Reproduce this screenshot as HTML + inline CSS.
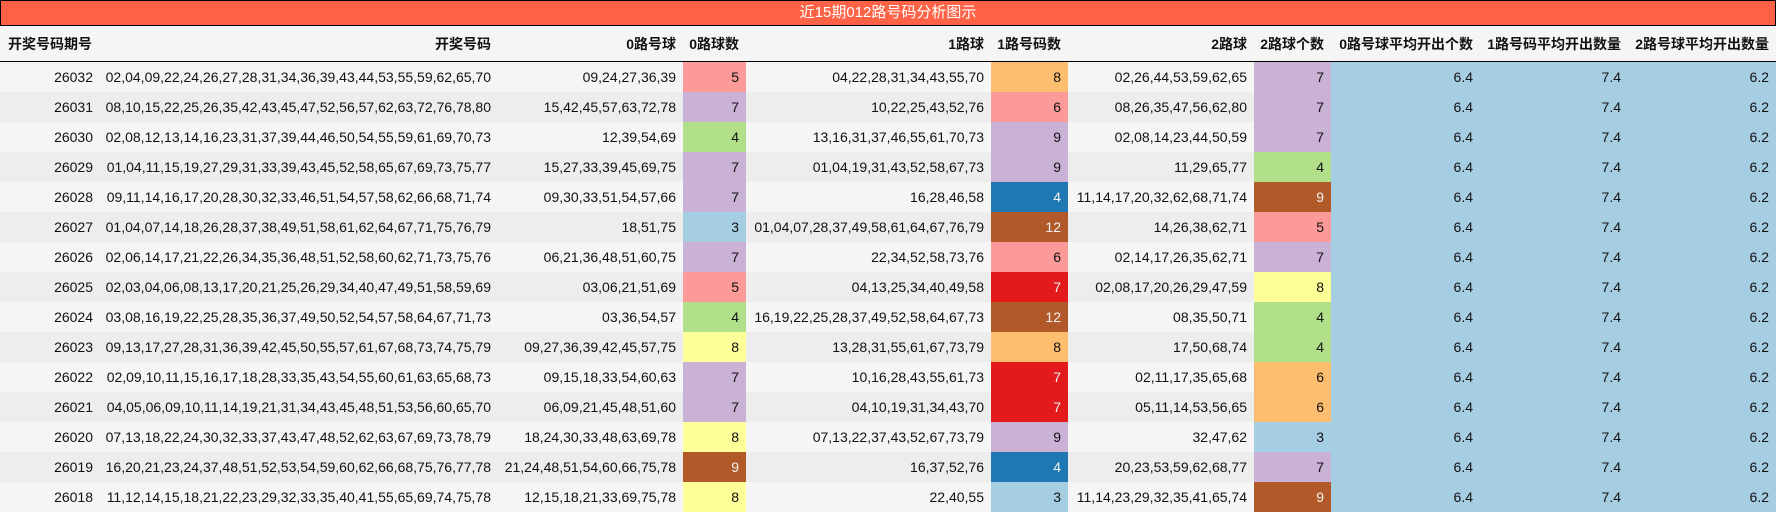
<!DOCTYPE html>
<html><head><meta charset="utf-8"><style>
html,body{margin:0;padding:0;background:#fff;width:1776px;height:513px;overflow:hidden}
body{font-family:"Liberation Sans","Noto Sans CJK SC",sans-serif;font-size:14px;color:#111}
.title{position:absolute;left:0;top:0;width:1774px;height:24px;background:#ff6347;border:1px solid #000;color:#fff;text-align:center;line-height:24px;font-size:15px}
table{position:absolute;left:0;top:26px;border-collapse:collapse;table-layout:fixed;width:1776px}
th,td{padding:0 7px 0 0;text-align:right;white-space:nowrap;overflow:hidden}
th{height:35px;background:#f5f5f5;font-weight:bold;font-size:14px;border-bottom:1px solid #000}
th:first-child{text-align:left;padding-left:8px}
td{height:30px}
tr:nth-child(even) td{background:#f5f5f5}
tr:nth-child(odd) td{background:#ededed}
td.b{background:#a6cee3!important}
.c3{background:#a6cee3!important}.c4g{background:#b2df8a!important}.c5{background:#fb9a99!important}
.c6{background:#fb9a99!important}.c6o{background:#fdbf6f!important}.c7{background:#cab2d6!important}
.c8{background:#ffff99!important}.c8o{background:#fdbf6f!important}.c9{background:#cab2d6!important}
.br{background:#b15928!important;color:#f3f3f3}.db{background:#1f78b4!important;color:#f3f3f3}.rd{background:#e31a1c!important;color:#f3f3f3}
</style></head><body>
<div class="title">近15期012路号码分析图示</div>
<table>
<colgroup><col style="width:100px"><col style="width:398px"><col style="width:185px"><col style="width:63px"><col style="width:245px"><col style="width:77px"><col style="width:186px"><col style="width:77px"><col style="width:149px"><col style="width:148px"><col style="width:148px"></colgroup>
<tr><th>开奖号码期号</th><th>开奖号码</th><th>0路号球</th><th>0路球数</th><th>1路球</th><th>1路号码数</th><th>2路球</th><th>2路球个数</th><th>0路号球平均开出个数</th><th>1路号码平均开出数量</th><th>2路号球平均开出数量</th></tr>
<tr><td>26032</td><td>02,04,09,22,24,26,27,28,31,34,36,39,43,44,53,55,59,62,65,70</td><td>09,24,27,36,39</td><td class="c5">5</td><td>04,22,28,31,34,43,55,70</td><td class="c8o">8</td><td>02,26,44,53,59,62,65</td><td class="c7">7</td><td class="b">6.4</td><td class="b">7.4</td><td class="b">6.2</td></tr>
<tr><td>26031</td><td>08,10,15,22,25,26,35,42,43,45,47,52,56,57,62,63,72,76,78,80</td><td>15,42,45,57,63,72,78</td><td class="c7">7</td><td>10,22,25,43,52,76</td><td class="c6">6</td><td>08,26,35,47,56,62,80</td><td class="c7">7</td><td class="b">6.4</td><td class="b">7.4</td><td class="b">6.2</td></tr>
<tr><td>26030</td><td>02,08,12,13,14,16,23,31,37,39,44,46,50,54,55,59,61,69,70,73</td><td>12,39,54,69</td><td class="c4g">4</td><td>13,16,31,37,46,55,61,70,73</td><td class="c9">9</td><td>02,08,14,23,44,50,59</td><td class="c7">7</td><td class="b">6.4</td><td class="b">7.4</td><td class="b">6.2</td></tr>
<tr><td>26029</td><td>01,04,11,15,19,27,29,31,33,39,43,45,52,58,65,67,69,73,75,77</td><td>15,27,33,39,45,69,75</td><td class="c7">7</td><td>01,04,19,31,43,52,58,67,73</td><td class="c9">9</td><td>11,29,65,77</td><td class="c4g">4</td><td class="b">6.4</td><td class="b">7.4</td><td class="b">6.2</td></tr>
<tr><td>26028</td><td>09,11,14,16,17,20,28,30,32,33,46,51,54,57,58,62,66,68,71,74</td><td>09,30,33,51,54,57,66</td><td class="c7">7</td><td>16,28,46,58</td><td class="db">4</td><td>11,14,17,20,32,62,68,71,74</td><td class="br">9</td><td class="b">6.4</td><td class="b">7.4</td><td class="b">6.2</td></tr>
<tr><td>26027</td><td>01,04,07,14,18,26,28,37,38,49,51,58,61,62,64,67,71,75,76,79</td><td>18,51,75</td><td class="c3">3</td><td>01,04,07,28,37,49,58,61,64,67,76,79</td><td class="br">12</td><td>14,26,38,62,71</td><td class="c5">5</td><td class="b">6.4</td><td class="b">7.4</td><td class="b">6.2</td></tr>
<tr><td>26026</td><td>02,06,14,17,21,22,26,34,35,36,48,51,52,58,60,62,71,73,75,76</td><td>06,21,36,48,51,60,75</td><td class="c7">7</td><td>22,34,52,58,73,76</td><td class="c6">6</td><td>02,14,17,26,35,62,71</td><td class="c7">7</td><td class="b">6.4</td><td class="b">7.4</td><td class="b">6.2</td></tr>
<tr><td>26025</td><td>02,03,04,06,08,13,17,20,21,25,26,29,34,40,47,49,51,58,59,69</td><td>03,06,21,51,69</td><td class="c5">5</td><td>04,13,25,34,40,49,58</td><td class="rd">7</td><td>02,08,17,20,26,29,47,59</td><td class="c8">8</td><td class="b">6.4</td><td class="b">7.4</td><td class="b">6.2</td></tr>
<tr><td>26024</td><td>03,08,16,19,22,25,28,35,36,37,49,50,52,54,57,58,64,67,71,73</td><td>03,36,54,57</td><td class="c4g">4</td><td>16,19,22,25,28,37,49,52,58,64,67,73</td><td class="br">12</td><td>08,35,50,71</td><td class="c4g">4</td><td class="b">6.4</td><td class="b">7.4</td><td class="b">6.2</td></tr>
<tr><td>26023</td><td>09,13,17,27,28,31,36,39,42,45,50,55,57,61,67,68,73,74,75,79</td><td>09,27,36,39,42,45,57,75</td><td class="c8">8</td><td>13,28,31,55,61,67,73,79</td><td class="c8o">8</td><td>17,50,68,74</td><td class="c4g">4</td><td class="b">6.4</td><td class="b">7.4</td><td class="b">6.2</td></tr>
<tr><td>26022</td><td>02,09,10,11,15,16,17,18,28,33,35,43,54,55,60,61,63,65,68,73</td><td>09,15,18,33,54,60,63</td><td class="c7">7</td><td>10,16,28,43,55,61,73</td><td class="rd">7</td><td>02,11,17,35,65,68</td><td class="c6o">6</td><td class="b">6.4</td><td class="b">7.4</td><td class="b">6.2</td></tr>
<tr><td>26021</td><td>04,05,06,09,10,11,14,19,21,31,34,43,45,48,51,53,56,60,65,70</td><td>06,09,21,45,48,51,60</td><td class="c7">7</td><td>04,10,19,31,34,43,70</td><td class="rd">7</td><td>05,11,14,53,56,65</td><td class="c6o">6</td><td class="b">6.4</td><td class="b">7.4</td><td class="b">6.2</td></tr>
<tr><td>26020</td><td>07,13,18,22,24,30,32,33,37,43,47,48,52,62,63,67,69,73,78,79</td><td>18,24,30,33,48,63,69,78</td><td class="c8">8</td><td>07,13,22,37,43,52,67,73,79</td><td class="c9">9</td><td>32,47,62</td><td class="c3">3</td><td class="b">6.4</td><td class="b">7.4</td><td class="b">6.2</td></tr>
<tr><td>26019</td><td>16,20,21,23,24,37,48,51,52,53,54,59,60,62,66,68,75,76,77,78</td><td>21,24,48,51,54,60,66,75,78</td><td class="br">9</td><td>16,37,52,76</td><td class="db">4</td><td>20,23,53,59,62,68,77</td><td class="c7">7</td><td class="b">6.4</td><td class="b">7.4</td><td class="b">6.2</td></tr>
<tr><td>26018</td><td>11,12,14,15,18,21,22,23,29,32,33,35,40,41,55,65,69,74,75,78</td><td>12,15,18,21,33,69,75,78</td><td class="c8">8</td><td>22,40,55</td><td class="c3">3</td><td>11,14,23,29,32,35,41,65,74</td><td class="br">9</td><td class="b">6.4</td><td class="b">7.4</td><td class="b">6.2</td></tr>
</table>
</body></html>
